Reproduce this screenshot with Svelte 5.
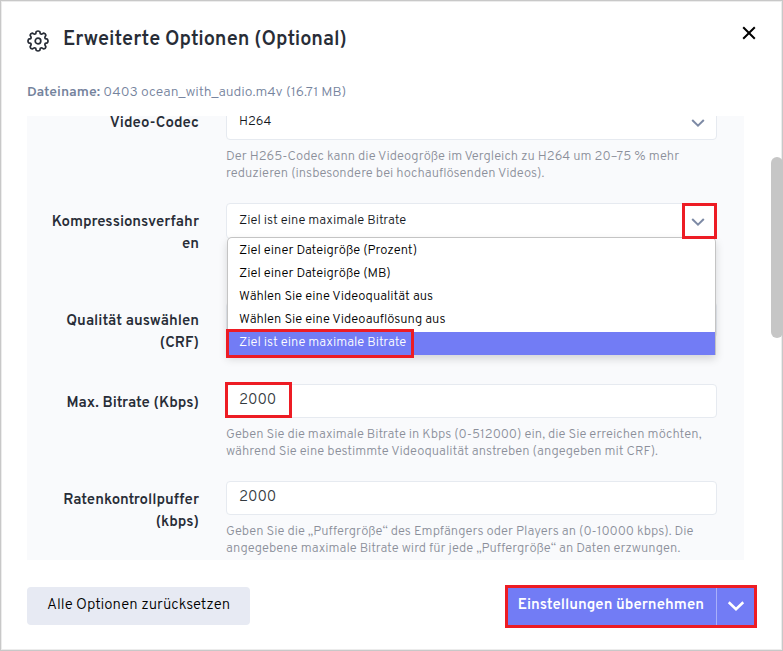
<script lang="ts">
	import { onMount } from 'svelte';

	const fileName = '0403 ocean_with_audio.m4v (16.71 MB)';

	const methods = [
		'Ziel einer Dateigröße (Prozent)',
		'Ziel einer Dateigröße (MB)',
		'Wählen Sie eine Videoqualität aus',
		'Wählen Sie eine Videoauflösung aus',
		'Ziel ist eine maximale Bitrate'
	];

	let method = $state(methods[4]);
	let codec = $state('H264');
	let maxBitrate = $state('2000');
	let bufferSize = $state('2000');
	let panel: HTMLElement;

	onMount(() => {
		panel.scrollTop = 36;
	});
</script>

{#snippet chevron()}
	<svg class="chevron" viewBox="0 0 14 8" aria-hidden="true">
		<path d="M1.2 1 L7 6.6 L12.8 1" />
	</svg>
{/snippet}

<div class="modal" role="dialog" aria-labelledby="title">
	<header>
		<svg class="gear" viewBox="0 0 22 22" aria-hidden="true">
			<path d="M9.2 1.6 Q11 0.4 12.8 1.6 L13.3 3.8 Q14.2 4.3 15 4 L16.8 3.1 Q18.6 3.4 18.9 5.2 L18 7 Q17.7 7.8 18.2 8.7 L20.4 9.2 Q21.6 11 20.4 12.8 L18.2 13.3 Q17.7 14.2 18 15 L18.9 16.8 Q18.6 18.6 16.8 18.9 L15 18 Q14.2 17.7 13.3 18.2 L12.8 20.4 Q11 21.6 9.2 20.4 L8.7 18.2 Q7.8 17.7 7 18 L5.2 18.9 Q3.4 18.6 3.1 16.8 L4 15 Q4.3 14.2 3.8 13.3 L1.6 12.8 Q0.4 11 1.6 9.2 L3.8 8.7 Q4.3 7.8 4 7 L3.1 5.2 Q3.4 3.4 5.2 3.1 L7 4 Q7.8 4.3 8.7 3.8 Z" />
			<circle cx="11" cy="11" r="2.8" />
		</svg>
		<h2 id="title">Erweiterte Optionen (Optional)</h2>
		<button class="close" aria-label="Schließen">
			<svg viewBox="0 0 14 14" aria-hidden="true">
				<path d="M1.2 1.2 L12.8 12.8 M12.8 1.2 L1.2 12.8" />
			</svg>
		</button>
	</header>

	<p class="file"><strong>Dateiname:</strong> {fileName}</p>

	<div class="panel" bind:this={panel}>
		<div class="row">
			<label for="codec">Video-Codec</label>
			<div class="field">
				<div class="select">
					<select id="codec" bind:value={codec}>
						<option>H264</option>
						<option>H265</option>
					</select>
					{@render chevron()}
				</div>
				<p class="hint">Der H265-Codec kann die Videogröße im Vergleich zu H264 um 20–75 % mehr reduzieren (insbesondere bei hochauflösenden Videos).</p>
			</div>
		</div>

		<div class="row">
			<label for="method">Kompressionsverfahr<wbr />en</label>
			<div class="field field-method">
				<div class="select">
					<select id="method" bind:value={method}>
						{#each methods as m}
							<option>{m}</option>
						{/each}
					</select>
					{@render chevron()}
					<span class="mark mark-arrow"></span>
					<ul class="menu" role="listbox" aria-label="Kompressionsverfahren">
						{#each methods as m}
							<li role="option" aria-selected={m === method} class:active={m === method}>
								{m}
								{#if m === method}<span class="mark mark-option"></span>{/if}
							</li>
						{/each}
					</ul>
				</div>
			</div>
		</div>

		<div class="row">
			<label for="crf">Qualität auswählen (CRF)</label>
			<div class="field field-crf">
				<div class="select">
					<select id="crf"></select>
				</div>
			</div>
		</div>

		<div class="row">
			<label for="bitrate">Max. Bitrate (Kbps)</label>
			<div class="field">
				<div class="text">
					<input id="bitrate" type="text" bind:value={maxBitrate} />
					<span class="mark mark-value"></span>
				</div>
				<p class="hint">Geben Sie die maximale Bitrate in Kbps (0-512000) ein, die Sie erreichen möchten, während Sie eine bestimmte Videoqualität anstreben (angegeben mit CRF).</p>
			</div>
		</div>

		<div class="row">
			<label for="buffer">Ratenkontrollpuffer (kbps)</label>
			<div class="field">
				<div class="text">
					<input id="buffer" type="text" bind:value={bufferSize} />
				</div>
				<p class="hint">Geben Sie die „Puffergröße“ des Empfängers oder Players an (0-10000 kbps). Die angegebene maximale Bitrate wird für jede „Puffergröße“ an Daten erzwungen.</p>
			</div>
		</div>
	</div>

	<footer>
		<button class="reset">Alle Optionen zurücksetzen</button>
		<div class="apply">
			<button class="apply-main">Einstellungen übernehmen</button>
			<button class="apply-more" aria-label="Weitere Aktionen">{@render chevron()}</button>
			<span class="mark mark-apply"></span>
		</div>
	</footer>

	<div class="scrollbar"></div>
</div>

<style>
	:global(body) {
		background: #fff;
	}

	.modal {
		position: relative;
		box-sizing: border-box;
		display: flex;
		flex-direction: column;
		height: 100vh;
		padding: 24px 26px 25px;
		border: 1px solid #c8c8c8;
		box-shadow: inset 0 0 0 1px #ececec;
		font-family: Overpass, Roboto, sans-serif;
		font-size: 13px;
		color: #282d37;
		background: #fff;
	}

	button,
	input,
	select {
		font: inherit;
		color: inherit;
		margin: 0;
	}

	button {
		border: 0;
		padding: 0;
		cursor: pointer;
	}

	p,
	h2,
	ul {
		margin: 0;
		padding: 0;
	}

	header {
		display: flex;
		align-items: flex-start;
	}

	.gear {
		width: 22px;
		height: 22px;
		margin: 5px 14px 0 0;
		fill: none;
		stroke: #282d37;
		stroke-width: 1.7;
		stroke-linejoin: round;
	}

	h2 {
		flex: 1;
		font-size: 20px;
		line-height: 30px;
		font-weight: 600;
	}

	.close {
		width: 14px;
		height: 14px;
		margin-top: 1px;
		background: none;
	}

	.close svg {
		display: block;
		stroke: #000;
		stroke-width: 2;
	}

	.file {
		margin: 29px 0 14px;
		font-size: 14px;
		line-height: 18px;
		font-weight: 300;
		color: #75839d;
	}

	.file strong {
		font-weight: 600;
	}

	.panel {
		flex: 1;
		min-height: 0;
		margin-right: 12px;
		overflow-y: auto;
		scrollbar-width: none;
		background: #f9fafc;
	}

	.row {
		display: grid;
		grid-template-columns: 148px 1fr;
		column-gap: 27px;
		padding: 0 27px 20px 24px;
	}

	.row:first-child {
		padding-top: 24px;
	}

	.field-method {
		height: 79px;
	}

	.field-crf {
		height: 62px;
	}

	label {
		padding-top: 9px;
		font-size: 15px;
		line-height: 22px;
		font-weight: 600;
		text-align: right;
	}

	.select,
	.text {
		position: relative;
	}

	select,
	input {
		box-sizing: border-box;
		display: block;
		width: 100%;
		border: 1px solid #e6eaf0;
		border-radius: 4px;
		outline: 0;
		background: #fff;
	}

	select {
		appearance: none;
		height: 36px;
		padding: 0 40px 1px 12px;
		font-weight: 300;
		color: #14171d;
	}

	input {
		height: 34px;
		padding: 0 12px 2px;
		font-size: 15px;
		font-weight: 300;
		color: #343a40;
	}

	.chevron {
		width: 14px;
		height: 8px;
		fill: none;
		stroke: #7d8aa5;
		stroke-width: 2;
	}

	.select .chevron {
		position: absolute;
		top: 15px;
		right: 12px;
		pointer-events: none;
	}

	.hint {
		margin-top: 9px;
		font-size: 13px;
		line-height: 17px;
		font-weight: 300;
		color: #8b8f9a;
	}

	.menu {
		position: absolute;
		z-index: 1;
		top: 34px;
		left: 1px;
		right: 1px;
		padding-top: 2px;
		border: 1px solid #c4c4c4;
		border-bottom: 0;
		border-radius: 5px 5px 0 0;
		list-style: none;
		font-weight: 300;
		background: #fff;
		box-shadow: 0 4px 8px rgba(0, 0, 0, 0.15);
		color: #000;
	}

	.menu li {
		position: relative;
		padding-left: 11px;
		line-height: 23px;
	}

	.menu .active {
		color: #fff;
		background: #727cf5;
	}

	.mark {
		position: absolute;
		box-sizing: border-box;
		border: 3px solid #ed1c24;
		pointer-events: none;
	}

	.mark-arrow {
		z-index: 2;
		top: 0;
		right: 0;
		width: 35px;
		height: 36px;
	}

	.mark-option {
		top: -3px;
		left: -2px;
		width: 188px;
		height: 29px;
	}

	.mark-value {
		top: -2px;
		left: -1px;
		width: 67px;
		height: 36px;
	}

	footer {
		display: flex;
		justify-content: space-between;
		margin-top: 27px;
	}

	.reset {
		height: 38px;
		padding: 0 20px 2px;
		border-radius: 4px;
		font-size: 15px;
		font-weight: 300;
		color: #000;
		background: #e7eaf3;
	}

	.apply {
		position: relative;
		display: flex;
		margin-right: 2px;
		color: #fff;
		font-size: 15px;
		font-weight: 600;
	}

	.apply-main {
		padding: 0 12px 2px 10px;
		background: #727cf5;
	}

	.apply-more {
		width: 38px;
		border-left: 1px solid #a9b0fa;
		background: #727cf5;
	}

	.apply-more .chevron {
		display: block;
		width: 18px;
		height: 10px;
		margin: 0 auto;
		stroke: #fff;
	}

	.mark-apply {
		inset: -2px -3px -3px;
	}

	.scrollbar {
		position: absolute;
		top: 156px;
		right: -1px;
		width: 12px;
		height: 181px;
		border-radius: 6px;
		background: #c6c6c6;
	}
</style>
